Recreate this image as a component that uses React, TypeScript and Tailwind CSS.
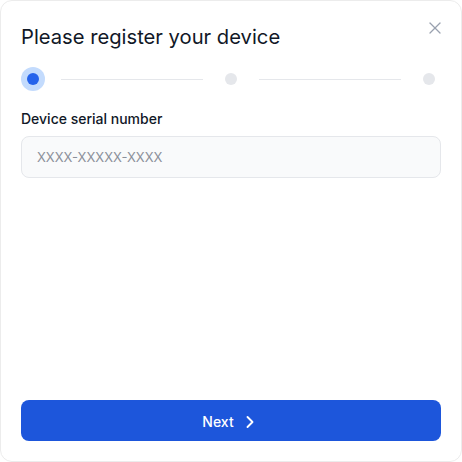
import { X, ChevronRight } from 'lucide-react'

export default function App() {
  return (
    <div
      className="relative flex h-[462px] w-[462px] flex-col rounded-xl border border-[#ececec] bg-white p-5 text-gray-900"
      style={{ fontFamily: 'Inter, "Noto Sans", sans-serif' }}
    >
      <button className="absolute right-[16px] top-[17px] text-gray-400">
        <X size={20} strokeWidth={1.5} />
      </button>

      <h2 className="mt-[2px] text-[20.2px] leading-7 text-[#111827]">Please register your device</h2>

      <div className="mt-[16px] flex items-center">
        <div className="flex h-6 w-6 items-center justify-center rounded-full bg-[#c3dbfd]">
          <div className="h-3 w-3 rounded-full bg-[#2563eb]" />
        </div>
        <div className="mx-4 h-px flex-1 bg-gray-200" />
        <div className="flex h-6 w-6 items-center justify-center">
          <div className="h-3 w-3 rounded-full bg-gray-200" />
        </div>
        <div className="mx-4 h-px flex-1 bg-gray-200" />
        <div className="flex h-6 w-6 items-center justify-center">
          <div className="h-3 w-3 rounded-full bg-gray-200" />
        </div>
      </div>

      <label className="mt-[18px] text-sm font-medium leading-5 text-[#111827]">Device serial number</label>
      <input
        type="text"
        placeholder="XXXX-XXXXX-XXXX"
        className="mt-[7px] h-[42px] w-full rounded-lg border border-gray-200 bg-gray-50 px-[15px] text-[13px] placeholder:text-[#8b909a] outline-none"
      />

      <button className="mt-auto flex h-[41px] w-full items-center justify-center gap-1.5 rounded-lg bg-[#1d56db] pt-[2px] text-sm font-medium text-white">
        Next
        <ChevronRight size={20} strokeWidth={2.25} />
      </button>
    </div>
  )
}
